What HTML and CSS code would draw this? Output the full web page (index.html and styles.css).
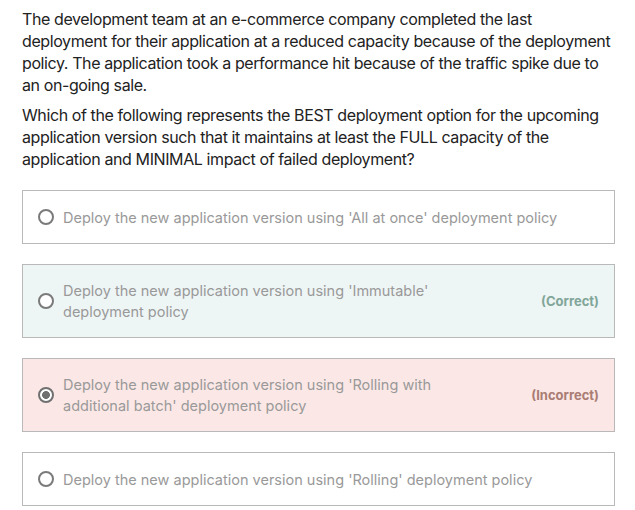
FILE: index.html
```html
<!DOCTYPE html>
<html>
<head>
<meta charset="utf-8">
<link rel="stylesheet" href="styles.css">
</head>
<body>
<div class="question">
  <p class="q">The development team at an e-commerce company completed the last deployment for their application at a reduced capacity because of the deployment policy. The application took a performance hit because of the traffic spike due to an on-going sale.</p>
  <p class="q">Which of the following represents the BEST deployment option for the upcoming application version such that it maintains at least the FULL capacity of the application and MINIMAL impact of failed deployment?</p>
</div>
<div class="options">
  <div class="option">
    <span class="radio"></span>
    <span class="label">Deploy the new application version using 'All at once' deployment policy</span>
  </div>
  <div class="option correct">
    <span class="radio"></span>
    <span class="label">Deploy the new application version using 'Immutable' deployment policy</span>
    <span class="status">(Correct)</span>
  </div>
  <div class="option incorrect">
    <span class="radio checked"></span>
    <span class="label">Deploy the new application version using 'Rolling with additional batch' deployment policy</span>
    <span class="status">(Incorrect)</span>
  </div>
  <div class="option">
    <span class="radio"></span>
    <span class="label">Deploy the new application version using 'Rolling' deployment policy</span>
  </div>
</div>
</body>
</html>
```
FILE: styles.css
```css
html, body {
  margin: 0;
  background: #ffffff;
}
body {
  padding: 8px 20px 0 22px;
  font-family: Inter, "Liberation Sans", sans-serif;
  color: #222222;
}
.q {
  margin: 0 0 8px 0;
  font-size: 16px;
  line-height: 22px;
  letter-spacing: -0.4px;
}
.options {
  margin-top: 20px;
  display: flex;
  flex-direction: column;
  gap: 20px;
}
.option {
  display: flex;
  align-items: center;
  box-sizing: border-box;
  min-height: 54px;
  border: 1px solid #b9b9b9;
  padding: 15px 15px;
  background: #ffffff;
}
.option.correct {
  background: #eef5f5;
}
.option.incorrect {
  background: #fbe8e6;
}
.radio {
  flex: none;
  width: 16px;
  height: 16px;
  box-sizing: border-box;
  border: 2px solid #7a7a7a;
  border-radius: 50%;
  background: #ffffff;
  margin-right: 9px;
}
.radio.checked {
  border: 2.5px solid #707070;
  background: radial-gradient(circle, #707070 0 3.6px, #ffffff 4.2px);
}
.label {
  flex: 1;
  font-size: 14.5px;
  line-height: 21px;
  color: #999999;
}
.correct .label, .incorrect .label {
  padding-right: 60px;
}
.status {
  flex: none;
  font-size: 13px;
  font-weight: 700;
  margin-left: 10px;
}
.correct .status {
  color: #80a699;
}
.incorrect .status {
  color: #a97c74;
}
```
